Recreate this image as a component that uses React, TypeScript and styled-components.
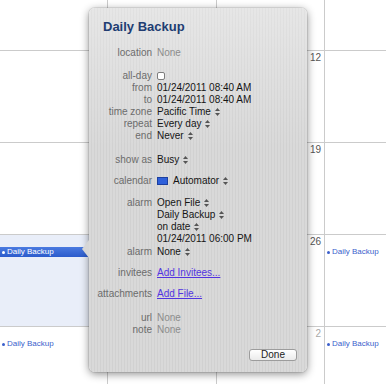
import React from 'react';
import styled, { createGlobalStyle } from 'styled-components';

const GlobalStyle = createGlobalStyle`
  html, body {
    margin: 0;
    padding: 0;
    background: #fff;
    overflow: hidden;
  }
  body {
    font-family: 'Liberation Sans', Arial, sans-serif;
  }
`;

const Page = styled.div`
  position: relative;
  width: 386px;
  height: 384px;
  overflow: hidden;
`;

const Calendar = styled.div`
  display: grid;
  grid-template-columns: 107px 108px 107px 1fr;
  grid-template-rows: 50px 91px 91px 91px 1fr;
  gap: 1px;
  width: 100%;
  height: 100%;
  background: #cbcbcb;
`;

const Cell = styled.div<{ $selected?: boolean }>`
  background: ${(p) => (p.$selected ? '#e9eef9' : '#fff')};
  overflow: hidden;
`;

const DayNumber = styled.div<{ $other?: boolean }>`
  padding: 1px 3px 0 0;
  text-align: right;
  font-size: 10px;
  line-height: 12px;
  color: ${(p) => (p.$other ? '#a8a8a8' : '#555')};
`;

const Event = styled.div<{ $selected?: boolean }>`
  display: flex;
  align-items: center;
  gap: 2px;
  margin-top: 12px;
  height: 10px;
  padding-left: 2px;
  font-size: 8px;
  line-height: 10px;
  white-space: nowrap;
  color: ${(p) => (p.$selected ? '#fff' : '#3b5fcc')};
  background: ${(p) =>
    p.$selected ? 'linear-gradient(#4a7ae0, #2b5bcc)' : 'transparent'};

  &::before {
    content: '';
    width: 3px;
    height: 3px;
    border-radius: 50%;
    background: currentColor;
  }
`;

const Popover = styled.div`
  position: absolute;
  left: 89px;
  top: 8px;
  width: 218px;
  height: 364px;
  box-sizing: border-box;
  padding: 11px 10px 0 0;
  border-radius: 6px;
  background:
    linear-gradient(rgba(255, 255, 255, 0.35), rgba(255, 255, 255, 0) 140px),
    repeating-linear-gradient(90deg, #d9d9d9 0 2px, #d1d1d1 2px 3px);
  box-shadow: 0 2px 9px rgba(0, 0, 0, 0.45), 0 0 0 1px rgba(0, 0, 0, 0.08);
  font-size: 10px;

  &::before {
    content: '';
    position: absolute;
    left: -7px;
    top: 232px;
    border-top: 9px solid transparent;
    border-bottom: 9px solid transparent;
    border-right: 7px solid #d6d6d6;
  }
`;

const Title = styled.div`
  margin-left: 14px;
  font-size: 13px;
  line-height: 16px;
  font-weight: bold;
  color: #213d72;
`;

const Section = styled.div<{ $gap: number }>`
  margin-top: ${(p) => p.$gap}px;
`;

const Row = styled.div`
  display: grid;
  grid-template-columns: 63px 1fr;
  column-gap: 5px;
  line-height: 12px;
`;

const Label = styled.div`
  text-align: right;
  color: #6c6c6c;
  white-space: nowrap;
`;

const Value = styled.div<{ $muted?: boolean }>`
  color: ${(p) => (p.$muted ? '#8c8c8c' : '#151515')};
  white-space: nowrap;
`;

const Link = styled.span`
  color: #5234e0;
  text-decoration: underline;
`;

const Checkbox = styled.span`
  display: inline-block;
  width: 6px;
  height: 6px;
  border: 1px solid #7d7d7d;
  border-radius: 2px;
  background: #fff;
  vertical-align: -1px;
`;

const Swatch = styled.span`
  display: inline-block;
  width: 9px;
  height: 6px;
  margin-right: 5px;
  border: 1px solid #1c3f9f;
  background: #2e60da;
  vertical-align: -1px;
`;

const StepperIcon = styled.svg`
  margin-left: 4px;
  vertical-align: -1px;
`;

const Footer = styled.div`
  display: flex;
  justify-content: flex-end;
  margin-top: 13px;
`;

const Button = styled.button`
  width: 48px;
  height: 12px;
  padding: 0;
  border: 1px solid #9c9c9c;
  border-radius: 3px;
  background: linear-gradient(#ffffff, #ebebeb);
  font-family: inherit;
  font-size: 10px;
  line-height: 10px;
  color: #222;
`;

const Stepper = () => (
  <StepperIcon width="5" height="8" viewBox="0 0 5 8">
    <path d="M2.5 0 L5 3 L0 3 Z" fill="#555" />
    <path d="M0 5 L5 5 L2.5 8 Z" fill="#555" />
  </StepperIcon>
);

type Field = { label: string; value: React.ReactNode; muted?: boolean };

const Fields = ({ items }: { items: Field[] }) => (
  <>
    {items.map((f, i) => (
      <Row key={i}>
        <Label>{f.label}</Label>
        <Value $muted={f.muted}>{f.value}</Value>
      </Row>
    ))}
  </>
);

const weeks: { day?: string; other?: boolean; selected?: boolean; events?: boolean }[] = [
  {},
  { day: '12' },
  { day: '19' },
  { day: '26', selected: true, events: true },
  { day: '2', other: true, events: true },
];

const App = (): React.ReactElement => {
  return (
    <Page>
      <GlobalStyle />
      <Calendar>
        {weeks.map((w, i) => (
          <React.Fragment key={i}>
            <Cell $selected={w.selected}>
              {w.events && <Event $selected={w.selected}>Daily Backup</Event>}
            </Cell>
            <Cell />
            <Cell>{w.day && <DayNumber $other={w.other}>{w.day}</DayNumber>}</Cell>
            <Cell>{w.events && <Event>Daily Backup</Event>}</Cell>
          </React.Fragment>
        ))}
      </Calendar>

      <Popover>
        <Title>Daily Backup</Title>
        <Section $gap={12}>
          <Fields items={[{ label: 'location', value: 'None', muted: true }]} />
        </Section>
        <Section $gap={11}>
          <Fields
            items={[
              { label: 'all-day', value: <Checkbox /> },
              { label: 'from', value: '01/24/2011 08:40 AM' },
              { label: 'to', value: '01/24/2011 08:40 AM' },
              { label: 'time zone', value: <>Pacific Time<Stepper /></> },
              { label: 'repeat', value: <>Every day<Stepper /></> },
              { label: 'end', value: <>Never<Stepper /></> },
            ]}
          />
        </Section>
        <Section $gap={12}>
          <Fields items={[{ label: 'show as', value: <>Busy<Stepper /></> }]} />
        </Section>
        <Section $gap={9}>
          <Fields
            items={[{ label: 'calendar', value: <><Swatch />Automator<Stepper /></> }]}
          />
        </Section>
        <Section $gap={10}>
          <Row>
            <Label>alarm</Label>
            <Value>
              <div>Open File<Stepper /></div>
              <div>Daily Backup<Stepper /></div>
              <div>on date<Stepper /></div>
              <div>01/24/2011 06:00 PM</div>
            </Value>
          </Row>
        </Section>
        <Section $gap={1}>
          <Fields items={[{ label: 'alarm', value: <>None<Stepper /></> }]} />
        </Section>
        <Section $gap={9}>
          <Fields items={[{ label: 'invitees', value: <Link>Add Invitees...</Link> }]} />
        </Section>
        <Section $gap={9}>
          <Fields items={[{ label: 'attachments', value: <Link>Add File...</Link> }]} />
        </Section>
        <Section $gap={12}>
          <Fields
            items={[
              { label: 'url', value: 'None', muted: true },
              { label: 'note', value: 'None', muted: true },
            ]}
          />
        </Section>
        <Footer>
          <Button>Done</Button>
        </Footer>
      </Popover>
    </Page>
  );
};

export default App;
